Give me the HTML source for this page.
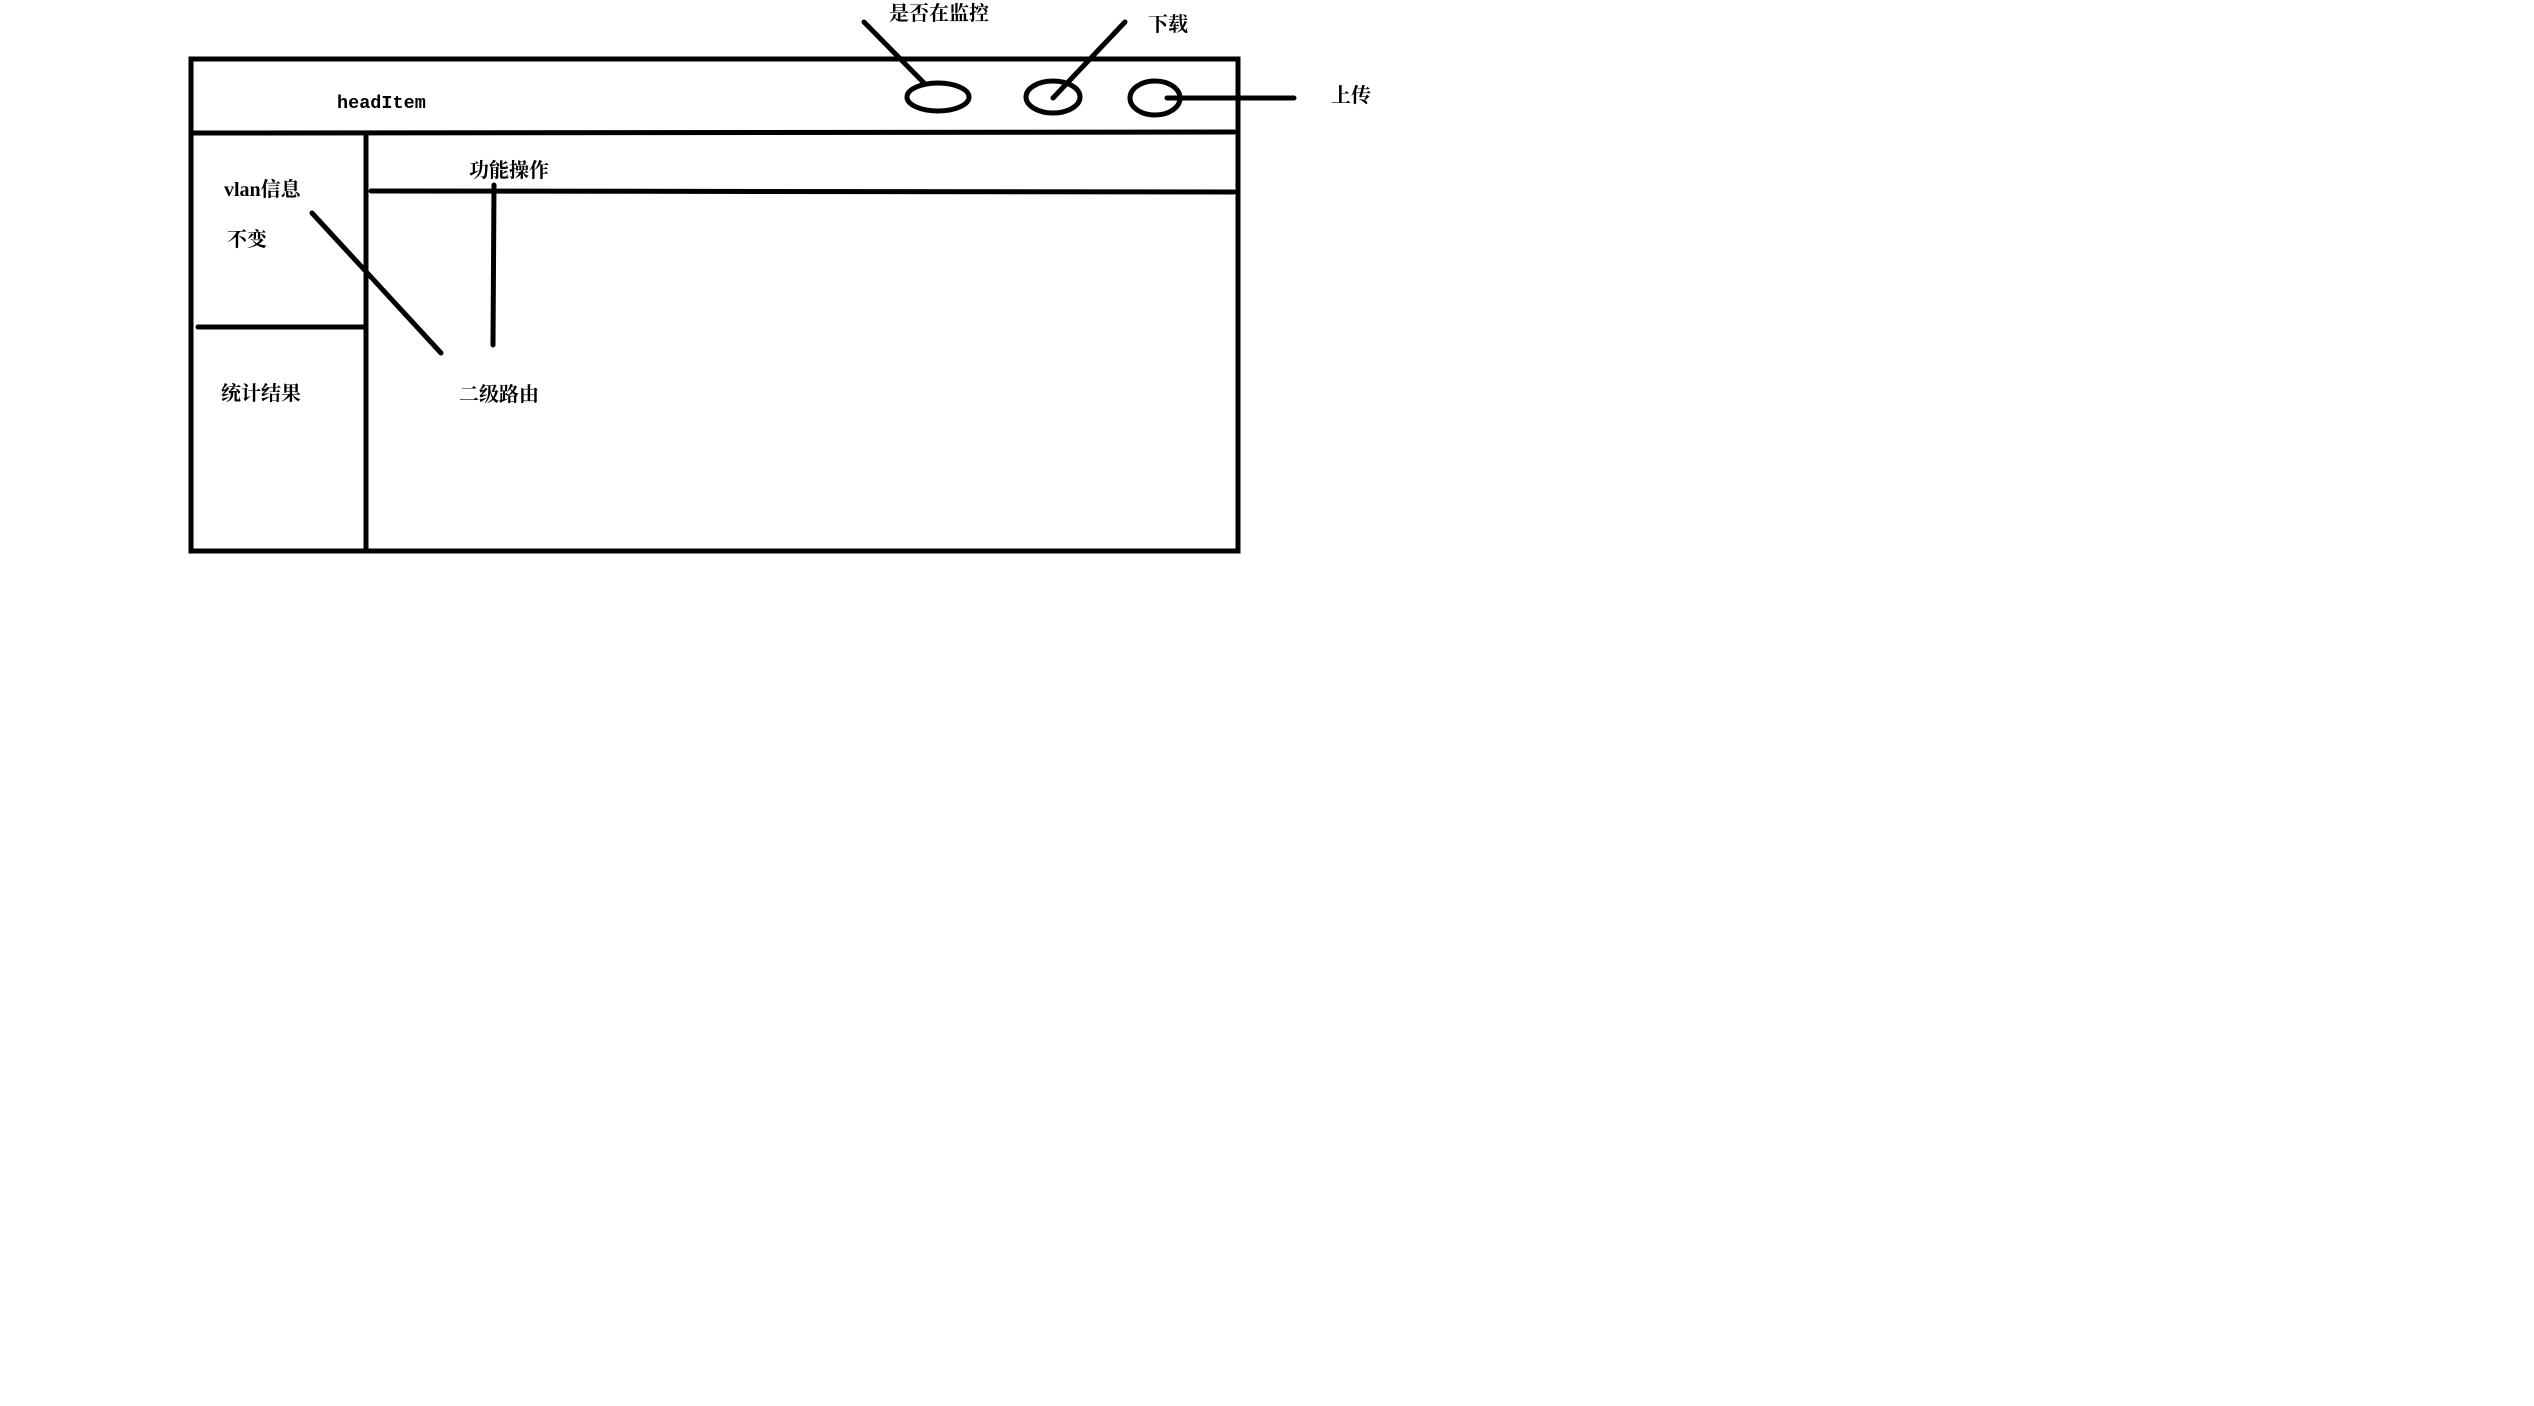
<!DOCTYPE html>
<html><head><meta charset="utf-8"><style>
html,body{margin:0;padding:0;background:#fff;width:2534px;height:1406px;overflow:hidden}
svg{display:block}
text{font-family:"Liberation Serif","Noto Serif CJK SC",serif;font-size:20px;fill:#000;font-weight:bold}
.m{font-family:"Liberation Mono","Noto Sans CJK SC",monospace;font-size:18.5px;font-weight:bold}
</style></head><body>
<svg width="2534" height="1406" viewBox="0 0 2534 1406" xmlns="http://www.w3.org/2000/svg">
<g stroke="#000" stroke-width="5" fill="none" stroke-linecap="round">
<rect x="191" y="59" width="1047" height="492"/>
<line x1="191" y1="133" x2="1234" y2="132"/>
<line x1="366" y1="135" x2="366" y2="551"/>
<line x1="198" y1="327" x2="364" y2="327"/>
<line x1="371" y1="191" x2="1234" y2="192"/>
<line x1="494" y1="185" x2="493" y2="345"/>
<line x1="312" y1="213" x2="441" y2="353"/>
<ellipse cx="938" cy="97" rx="31" ry="14"/>
<ellipse cx="1053" cy="97" rx="27" ry="16"/>
<ellipse cx="1155" cy="98" rx="25" ry="17"/>
<line x1="864" y1="22" x2="925" y2="84"/>
<line x1="1125" y1="22" x2="1053" y2="98"/>
<line x1="1167" y1="98" x2="1294" y2="98"/>
</g>
<text x="889" y="20">是否在监控</text>
<text x="1148" y="31">下载</text>
<text x="1331" y="102">上传</text>
<text class="m" x="337" y="108">headItem</text>
<text x="469" y="177">功能操作</text>
<text x="224" y="196">vlan信息</text>
<text x="227" y="246">不变</text>
<text x="221" y="400">统计结果</text>
<text x="459" y="401">二级路由</text>
</svg>
</body></html>
